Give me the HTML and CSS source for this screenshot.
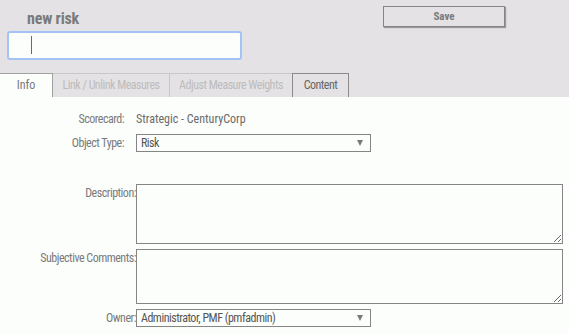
FILE: index.html
```html
<!DOCTYPE html>
<html lang="en">
<head>
    <meta charset="UTF-8">
    <meta name="viewport" content="width=device-width, initial-scale=1.0">
    <title>new risk</title>
    <link rel="stylesheet" href="styles.css">
</head>
<body>
    <!-- Cabecera -->
    <div class="header">
        <div class="title-col">
            <h1 class="title">new risk</h1>
            <div class="name-input"><span class="caret"></span></div>
        </div>
        <button class="save-btn">Save</button>
    </div>

    <!-- Pestañas -->
    <div class="tabs">
        <div class="tab tab-info active">Info</div>
        <div class="tab tab-link disabled">Link / Unlink Measures</div>
        <div class="tab tab-weights disabled">Adjust Measure Weights</div>
        <div class="tab tab-content">Content</div>
    </div>

    <!-- Formulario -->
    <div class="content">
        <div class="row row-scorecard">
            <div class="label label-pad">Scorecard:</div>
            <div class="value">Strategic - CenturyCorp</div>
        </div>
        <div class="row row-type">
            <div class="label label-pad">Object Type:</div>
            <div class="select-wrap">
                <select class="select"><option>Risk</option></select>
            </div>
        </div>
        <div class="row row-desc">
            <div class="label">Description:</div>
            <textarea class="area area-desc"></textarea>
        </div>
        <div class="row row-comments">
            <div class="label">Subjective Comments:</div>
            <textarea class="area area-comments"></textarea>
        </div>
        <div class="row row-owner">
            <div class="label">Owner:</div>
            <div class="select-wrap">
                <select class="select"><option>Administrator, PMF (pmfadmin)</option></select>
            </div>
        </div>
    </div>
</body>
</html>
```

FILE: styles.css
```css
html {
    overflow: hidden;
}
body {
    margin: 0;
    font-family: "Roboto Condensed", Roboto, "Liberation Sans", sans-serif;
    font-stretch: 80%;
    font-size: 12px;
    color: #777;
    background: #fcfefc;
}
.header {
    background: #e4e2e4;
    height: 73px;
    display: flex;
    align-items: flex-start;
    padding-left: 7px;
    box-sizing: border-box;
}
.title-col {
    width: 235px;
    padding-top: 10px;
}
.title {
    margin: 0 0 3px 20px;
    font-size: 16px;
    line-height: 18px;
    font-weight: bold;
    color: #7a7a7a;
    letter-spacing: -0.2px;
}
.name-input {
    height: 29px;
    border: 2px solid #a3c3f5;
    border-radius: 3px;
    background: #fcfefc;
    box-sizing: border-box;
    padding: 3px 0 0 22px;
}
.caret {
    display: block;
    width: 1px;
    height: 18px;
    background: #6a6a6a;
}
.save-btn {
    margin: 6px 0 0 141px;
    width: 122px;
    height: 21px;
    border: 1px solid #858585;
    box-shadow: 1px 1px 1px #9a9a9a;
    background: #e4e2e4;
    font-family: inherit;
    font-stretch: 80%;
    font-size: 11px;
    font-weight: bold;
    color: #7a7a7a;
    padding: 0;
}
.tabs {
    display: flex;
    height: 24px;
    background: #e4e2e4;
    letter-spacing: -0.5px;
}
.tab {
    box-sizing: border-box;
    height: 24px;
    line-height: 23px;
    text-align: center;
    border-top: 1px solid #c8c8c8;
    border-right: 1px solid #c8c8c8;
}
.tab-info {
    width: 53px;
    letter-spacing: 0;
}
.tab-link {
    width: 117px;
}
.tab-weights {
    width: 122px;
    border-right: none;
}
.tab-content {
    width: 57px;
    border: 1px solid #8a8a8a;
    border-bottom: none;
    color: #666;
}
.active {
    background: #fcfefc;
    border-color: #a0a0a0;
    color: #777;
}
.disabled {
    color: #bcbcbc;
}
.content {
    padding: 13px 6px 0 0;
}
.row {
    display: flex;
    align-items: center;
}
.label {
    width: 136px;
    flex-shrink: 0;
    text-align: right;
    line-height: 18px;
    color: #7a7a7a;
    letter-spacing: -0.5px;
}
.label-pad {
    padding-right: 12px;
    box-sizing: border-box;
}
.value {
    line-height: 18px;
    color: #6a6a6a;
}
.row-type {
    margin-top: 6px;
}
.row-desc {
    margin-top: 32px;
    align-items: flex-start;
}
.row-comments {
    margin-top: 5px;
    align-items: flex-start;
}
.row-owner {
    margin-top: 5px;
}
.select-wrap {
    position: relative;
    width: 235px;
}
.select-wrap::after {
    content: "";
    position: absolute;
    right: 8px;
    top: 6px;
    border-left: 3.5px solid transparent;
    border-right: 3.5px solid transparent;
    border-top: 6px solid #7a7a7a;
}
.select {
    appearance: none;
    -webkit-appearance: none;
    display: block;
    width: 100%;
    height: 18px;
    box-sizing: border-box;
    border: 1px solid #858585;
    border-radius: 0;
    background: #fcfefc;
    padding: 0 0 0 4px;
    font-family: inherit;
    font-stretch: 80%;
    font-size: 12px;
    letter-spacing: -0.5px;
    color: #555;
    outline: none;
}
.area {
    flex: 1;
    box-sizing: border-box;
    border: 1px solid #858585;
    background: #fcfefc;
    margin: 0;
    padding: 2px;
    font-family: inherit;
    outline: none;
}
.area-desc {
    height: 60px;
}
.area-comments {
    height: 55px;
}
```
